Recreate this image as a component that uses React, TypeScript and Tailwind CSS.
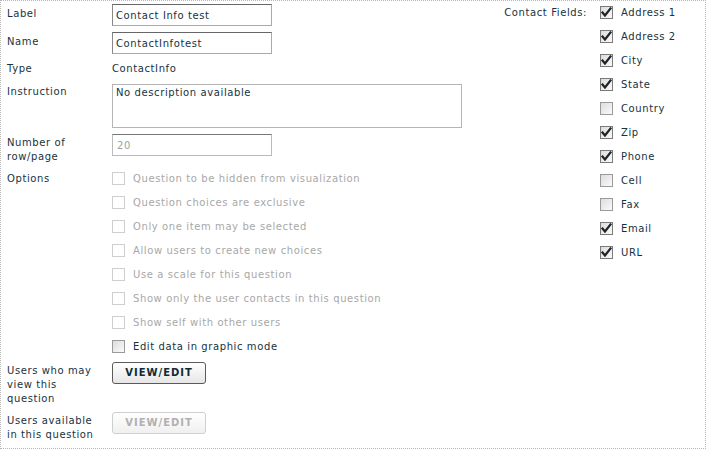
import React from "react";

const FONT = { fontFamily: '"DejaVu Sans", Verdana, sans-serif' };

function Check({ checked = false, disabled = false }: { checked?: boolean; disabled?: boolean }) {
  const border = disabled ? "border-[#cfcfcf]" : checked ? "border-[#7a7a7a]" : "border-[#9a9a9a]";
  const bg = disabled ? "bg-white" : "bg-gradient-to-br from-[#dcdcdc] to-[#fbfbfb]";
  return (
    <span className={`relative inline-block w-[13px] h-[13px] shrink-0 border ${border} ${bg}`}>
      {checked && (
        <svg width="11" height="11" viewBox="0 0 11 11" className="absolute left-0 top-0">
          <path d="M1.5 5.5 L4 8.5 L9.5 1.5" fill="none" stroke="#1c2328" strokeWidth="2.2" strokeLinecap="square" strokeLinejoin="miter" />
        </svg>
      )}
    </span>
  );
}

function Btn({ disabled = false }: { disabled?: boolean }) {
  return (
    <div
      className={`w-[94px] h-[22px] rounded-[3px] border flex items-center justify-center text-[10px] font-bold tracking-[1px] ${
        disabled
          ? "border-[#cfcfcf] text-[#b0b0b0] bg-gradient-to-b from-white to-[#f0f0f0]"
          : "border-[#5a5a5a] text-[#102a33] bg-gradient-to-b from-white to-[#e6e6e6]"
      }`}
    >
      VIEW/EDIT
    </div>
  );
}

const options: { text: string; disabled: boolean }[] = [
  { text: "Question to be hidden from visualization", disabled: true },
  { text: "Question choices are exclusive", disabled: true },
  { text: "Only one item may be selected", disabled: true },
  { text: "Allow users to create new choices", disabled: true },
  { text: "Use a scale for this question", disabled: true },
  { text: "Show only the user contacts in this question", disabled: true },
  { text: "Show self with other users", disabled: true },
  { text: "Edit data in graphic mode", disabled: false },
];

const fields: [string, boolean][] = [
  ["Address 1", true],
  ["Address 2", true],
  ["City", true],
  ["State", true],
  ["Country", false],
  ["Zip", true],
  ["Phone", true],
  ["Cell", false],
  ["Fax", false],
  ["Email", true],
  ["URL", true],
];

export default function App() {
  return (
    <div
      style={FONT}
      className="w-[706px] h-[449px] border border-dotted border-[#b5b5b5] bg-white text-[10px] leading-[14px] tracking-[0.6px] text-[#163340] flex"
    >
      <div className="flex-1 pl-[6px] pt-[3px] flex flex-col">
        <div className="flex h-[22px]">
          <div className="w-[105px] pt-[3px]">Label</div>
          <div className="w-[160px] h-[22px] border border-[#aaa] border-t-[#666] border-l-[#888] px-[3px] flex items-center pt-[1px]">Contact Info test</div>
        </div>
        <div className="flex h-[22px] mt-[6px]">
          <div className="w-[105px] pt-[3px]">Name</div>
          <div className="w-[160px] h-[22px] border border-[#aaa] border-t-[#666] border-l-[#888] px-[3px] flex items-center pt-[1px]">ContactInfotest</div>
        </div>
        <div className="flex h-[14px] mt-[8px]">
          <div className="w-[105px]">Type</div>
          <div>ContactInfo</div>
        </div>
        <div className="flex h-[44px] mt-[8px]">
          <div className="w-[105px] pt-[1px]">Instruction</div>
          <div className="w-[350px] h-[44px] border border-[#b5b5b5] px-[3px] pt-[1px]">No description available</div>
        </div>
        <div className="flex h-[30px] mt-[6px]">
          <div className="w-[105px] pt-[2px]">Number of<br />row/page</div>
          <div className="w-[160px] h-[22px] border border-[#bbb] border-t-[#777] px-[4px] flex items-center pt-[1px] text-[#a0a0a0]">20</div>
        </div>
        <div className="flex mt-[2px]">
          <div className="w-[105px] pt-[6px]">Options</div>
          <div className="flex flex-col">
            {options.map((o) => (
              <div key={o.text} className="flex items-center h-[24px] gap-[8px]">
                <Check disabled={o.disabled} />
                <span className={`pt-[1px] ${o.disabled ? "text-[#a8a8a8]" : ""}`}>{o.text}</span>
              </div>
            ))}
          </div>
        </div>
        <div className="flex h-[50px] mt-[4px]">
          <div className="w-[105px] pt-[2px]">Users who may<br />view this<br />question</div>
          <Btn />
        </div>
        <div className="flex">
          <div className="w-[105px] pt-[2px]">Users available<br />in this question</div>
          <Btn disabled />
        </div>
      </div>
      <div className="w-[205px] flex">
        <div className="w-[87px] h-[24px] flex items-center justify-end">Contact Fields:</div>
        <div className="ml-[13px] flex flex-col -mt-px">
          {fields.map(([f, c]) => (
            <div key={f} className="flex items-center h-[24px] gap-[8px]">
              <Check checked={c} />
              <span className="pt-[1px]">{f}</span>
            </div>
          ))}
        </div>
      </div>
    </div>
  );
}
